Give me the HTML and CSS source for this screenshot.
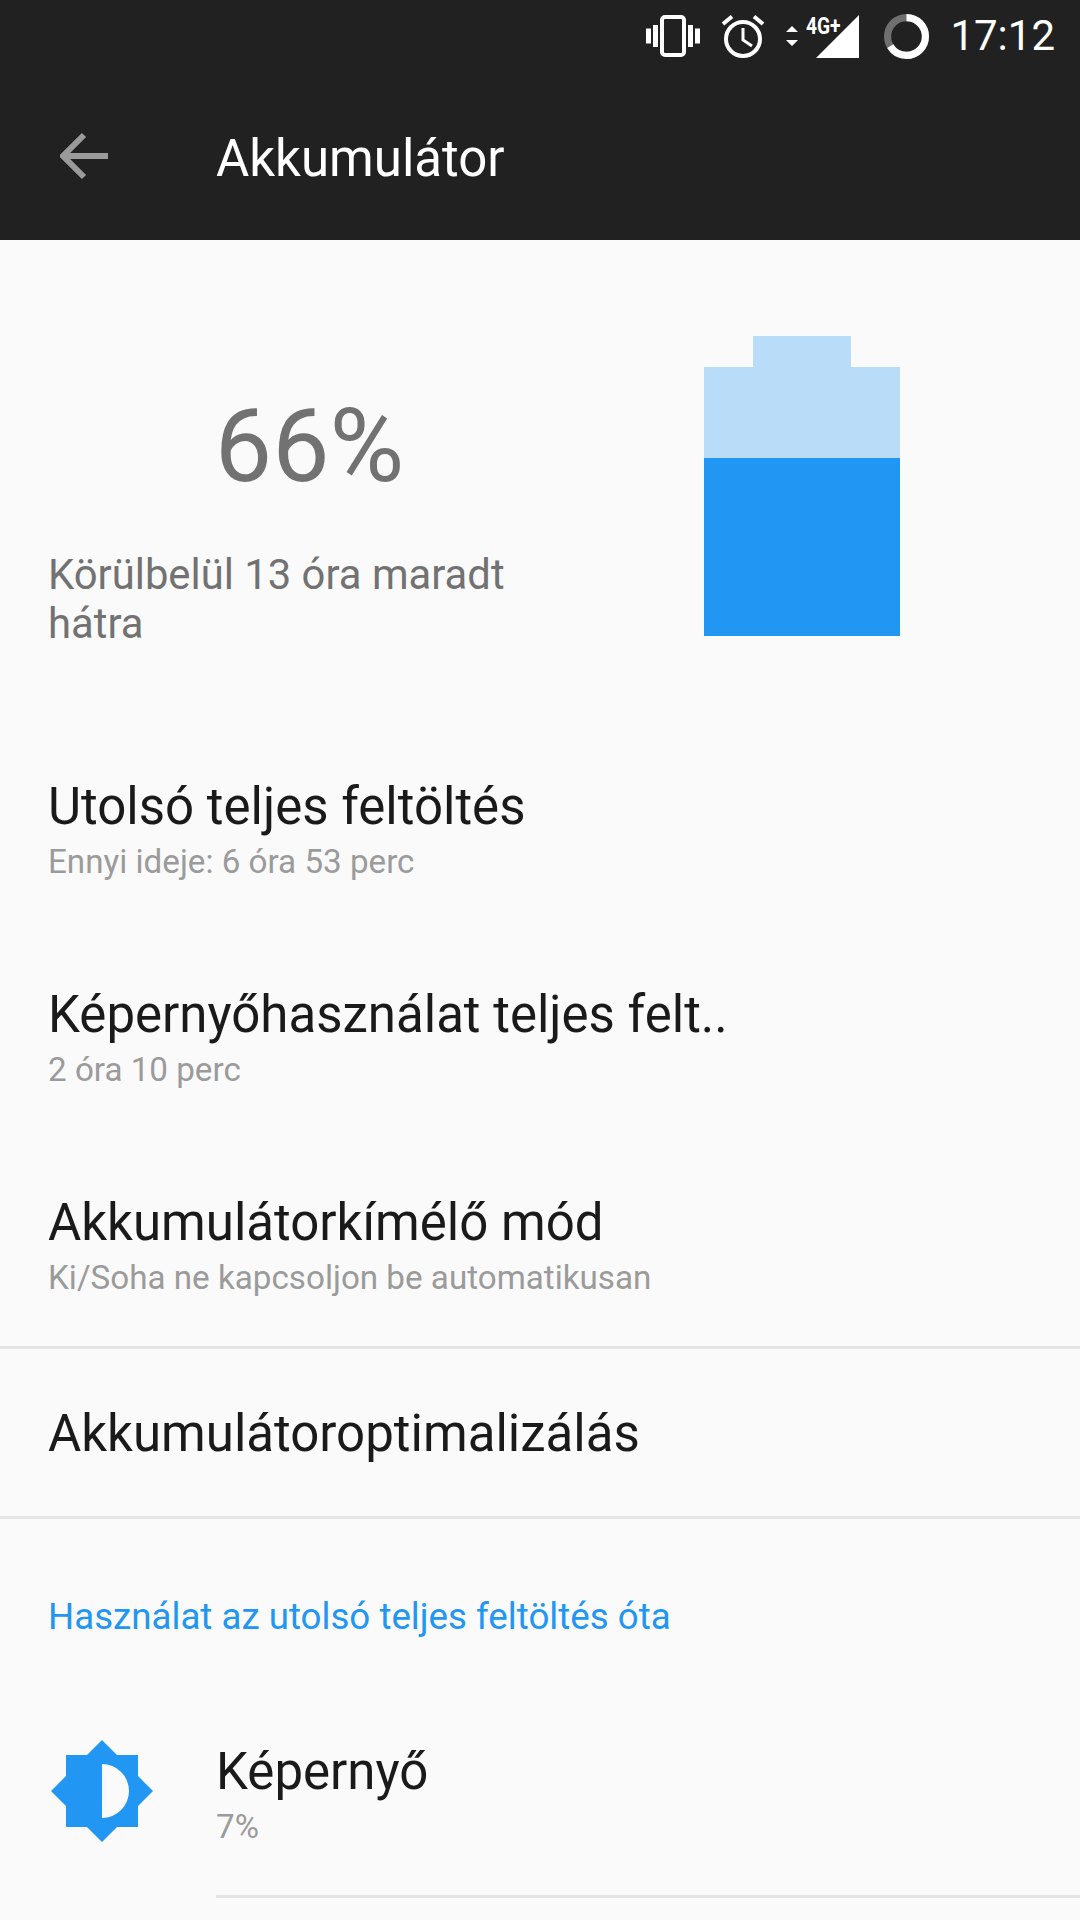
FILE: index.html
```html
<!DOCTYPE html>
<html lang="hu">
<head>
    <meta charset="UTF-8">
    <meta name="viewport" content="width=device-width, initial-scale=1.0">
    <title>Akkumulátor</title>
    <link rel="stylesheet" href="styles.css">
</head>
<body>

<header class="top">
    <div class="status-bar">
        <!-- vibration -->
        <svg class="icon-vibrate" viewBox="0 0 54 42" width="54" height="42">
            <rect x="0" y="13.500" width="5" height="15" fill="#fff"/>
            <rect x="7" y="10" width="5" height="22" fill="#fff"/>
            <rect x="16" y="2" width="22" height="38" rx="3" fill="none" stroke="#fff" stroke-width="4"/>
            <rect x="42" y="10" width="5" height="22" fill="#fff"/>
            <rect x="49" y="13.500" width="5" height="15" fill="#fff"/>
        </svg>
        <!-- alarm -->
        <svg class="icon-alarm" viewBox="0 0 44 44" width="44" height="44">
            <circle cx="22" cy="25" r="17" fill="none" stroke="#fff" stroke-width="4"/>
            <path d="M22 14v12l9 6" fill="none" stroke="#fff" stroke-width="3"/>
            <path d="M2 10 11 2.500M42 10 33 2.500" fill="none" stroke="#fff" stroke-width="4"/>
        </svg>
        <!-- data arrows -->
        <svg class="icon-arrows" viewBox="0 0 12 20" width="12" height="26">
            <path d="M6 0 12 6H0zM0 14H12L6 20z" fill="#fff"/>
        </svg>
        <div class="signal">
            <svg viewBox="0 0 43 43" width="43" height="43">
                <path d="M43 0V43H0z" fill="#fff"/>
            </svg>
            <span class="net">4G+</span>
        </div>
        <!-- battery ring -->
        <svg class="icon-ring" viewBox="0 0 44 44" width="45" height="45">
            <circle cx="22" cy="22" r="18.500" fill="none" stroke="#6f6f6f" stroke-width="7"/>
            <circle cx="22" cy="22" r="18.500" fill="none" stroke="#fff" stroke-width="7" stroke-dasharray="76.700 116.200" transform="rotate(-90 22 22)"/>
        </svg>
        <span class="clock">17:12</span>
    </div>
    <div class="app-bar">
        <svg class="back" viewBox="0 0 48 48" width="48" height="48">
            <path d="M48 24H4M24 3 3 24l21 21" fill="none" stroke="#9a9a9a" stroke-width="6"/>
        </svg>
        <h1>Akkumulátor</h1>
    </div>
</header>

<section class="summary">
    <div class="summary-text">
        <p class="percent">66%</p>
        <p class="remaining">Körülbelül 13 óra maradt hátra</p>
    </div>
    <div class="battery">
        <div class="battery-cap"></div>
        <div class="battery-body">
            <div class="battery-level"></div>
        </div>
    </div>
</section>

<div class="rows">
    <div class="row">
        <h3>Utolsó teljes feltöltés</h3>
        <p>Ennyi ideje: 6 óra 53 perc</p>
    </div>
    <div class="row">
        <h3>Képernyőhasználat teljes felt..</h3>
        <p>2 óra 10 perc</p>
    </div>
    <div class="row">
        <h3>Akkumulátorkímélő mód</h3>
        <p>Ki/Soha ne kapcsoljon be automatikusan</p>
    </div>
</div>

<div class="row-single">
    <h3>Akkumulátoroptimalizálás</h3>
</div>

<h2 class="section-title">Használat az utolsó teljes feltöltés óta</h2>

<div class="usage">
    <svg class="usage-icon" viewBox="0 0 102 102" width="102" height="102">
        <path d="M51 0 66 15H87V36L102 51 87 66V87H66L51 102 36 87H15V66L0 51 15 36V15H36z" fill="#2196f3"/>
        <path d="M51 24A27 27 0 0 1 51 78z" fill="#fafafa"/>
    </svg>
    <div class="usage-text">
        <h3>Képernyő</h3>
        <p>7%</p>
    </div>
</div>

</body>
</html>
```

FILE: styles.css
```css
* {
    box-sizing: border-box;
}

html, body {
    height: 1920px;
    overflow: hidden;
}

body {
    font-family: Roboto, "Noto Sans", sans-serif;
    margin: 0;
    padding: 0;
    background-color: #fafafa;
    color: #1a1a1a;
}

h1, h2, h3, p {
    margin: 0;
    font-weight: 400;
}

.top {
    height: 240px;
    background-color: #212121;
    color: #fff;
}

.status-bar {
    height: 72px;
    padding: 0 25px 0 0;
    display: flex;
    justify-content: flex-end;
    align-items: center;
}

.icon-vibrate {
    margin-right: 21px;
}

.icon-alarm {
    margin-right: 21px;
}

.icon-arrows {
    margin-right: 18px;
}

.signal {
    position: relative;
    width: 43px;
    height: 43px;
    margin-right: 25px;
}

.signal svg {
    display: block;
}

.net {
    position: absolute;
    top: -1px;
    left: -10px;
    font-size: 24px;
    line-height: 24px;
    font-weight: 700;
    transform: scaleX(0.8);
    transform-origin: left top;
}

.icon-ring {
    margin-right: 21px;
}

.clock {
    font-size: 42px;
    line-height: 50px;
}

.app-bar {
    height: 168px;
    padding: 0 0 0 60px;
    display: flex;
    align-items: center;
}

.back {
    flex: none;
    margin-right: 108px;
}

.app-bar h1 {
    font-size: 51px;
    padding-top: 4px;
}

.summary {
    height: 463px;
    padding: 96px 180px 0 48px;
    display: flex;
    justify-content: space-between;
}

.summary-text {
    width: 480px;
}

.percent {
    font-size: 102px;
    line-height: 112px;
    color: #727272;
    text-align: center;
    padding-left: 43px;
    margin-top: 54px;
    margin-bottom: 48px;
}

.remaining {
    font-size: 41.800px;
    line-height: 49px;
    color: #727272;
}

.battery {
    width: 196px;
}

.battery-cap {
    width: 98px;
    height: 31px;
    margin: 0 auto;
    background-color: #b9dcf9;
}

.battery-body {
    height: 269px;
    background-color: #b9dcf9;
    padding-top: 91px;
}

.battery-level {
    height: 178px;
    background-color: #2196f3;
}

.row {
    height: 208px;
    padding: 76px 48px 0;
}

.rows {
    padding-bottom: 19px;
}

.row h3, .row-single h3 {
    font-size: 51px;
    line-height: 56px;
}

.row p, .usage-text p {
    font-size: 33.200px;
    line-height: 40px;
    color: #9b9b9b;
    margin-top: 7px;
}

.row-single {
    height: 173px;
    padding: 3px 48px 0;
    display: flex;
    align-items: center;
    border-top: 3px solid #e4e4e4;
    border-bottom: 3px solid #e4e4e4;
}

.section-title {
    font-size: 36.700px;
    line-height: 40px;
    color: #2196f3;
    padding: 78px 48px 0;
}

.usage {
    padding: 103px 0 0 51px;
    display: flex;
}

.usage-icon {
    flex: none;
    margin-right: 63px;
}

.usage-text {
    flex: 1;
    height: 158px;
    padding-top: 4px;
    border-bottom: 3px solid #e4e4e4;
}

.usage-text h3 {
    font-size: 51px;
    line-height: 56px;
}
```
